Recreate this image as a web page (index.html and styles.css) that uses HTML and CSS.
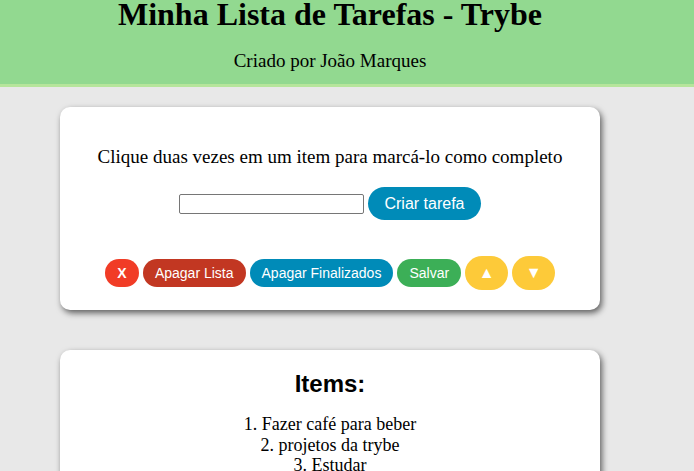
FILE: index.html
```html
<!DOCTYPE html>
<html lang="pt-BR">
<head>
<meta charset="utf-8">
<title>Minha Lista de Tarefas - Trybe</title>
<link rel="stylesheet" href="styles.css">
</head>
<body>
<header class="top">
  <div class="top-inner">
    <h1 class="title">Minha Lista de Tarefas - Trybe</h1>
    <p class="author">Criado por João Marques</p>
  </div>
</header>
<main class="page">
  <section class="card controls">
    <p class="hint">Clique duas vezes em um item para marcá-lo como completo</p>
    <div class="add-row">
      <input class="task-input" type="text">
      <button class="btn btn-create">Criar tarefa</button>
    </div>
    <div class="actions">
      <button class="btn btn-small btn-x">X</button>
      <button class="btn btn-small btn-clear">Apagar Lista</button>
      <button class="btn btn-small btn-done">Apagar Finalizados</button>
      <button class="btn btn-small btn-save">Salvar</button>
      <button class="btn btn-arrow">▲</button>
      <button class="btn btn-arrow">▼</button>
    </div>
  </section>
  <section class="card items">
    <h2 class="items-title">Items:</h2>
    <ol class="task-list">
      <li>Fazer café para beber</li>
      <li>projetos da trybe</li>
      <li>Estudar</li>
    </ol>
  </section>
</main>
</body>
</html>
```
FILE: styles.css
```css
html, body {
  margin: 0;
  padding: 0;
}
body {
  background: #e8e8e8;
  font-family: "Liberation Serif", "Times New Roman", serif;
  color: #000;
  overflow: hidden;
}
.top {
  background: #92d990;
  border-bottom: 3px solid #b6e59b;
  height: 84px;
}
.top-inner {
  width: 660px;
  text-align: center;
}
.title {
  margin: 0;
  font-size: 32px;
  line-height: 28px;
  font-weight: bold;
}
.author {
  margin: 22px 0 0;
  font-size: 19px;
  line-height: 22px;
}
.page {
  width: 540px;
  margin: 20px 0 0 60px;
  display: flex;
  flex-direction: column;
  gap: 40px;
}
.card {
  background: #fff;
  border-radius: 10px;
  box-shadow: 2px 3px 6px rgba(0, 0, 0, 0.6);
  text-align: center;
}
.controls {
  height: 203px;
  padding-top: 38px;
  box-sizing: border-box;
}
.hint {
  margin: 0;
  font-size: 19px;
  line-height: 24px;
}
.add-row {
  display: flex;
  justify-content: center;
  align-items: center;
  gap: 4px;
  margin-top: 18px;
}
.task-input {
  width: 185px;
  height: 20px;
  box-sizing: border-box;
  border: 1px solid #767676;
  border-radius: 2px;
  padding: 0;
  margin: 0;
}
.btn {
  border: none;
  color: #fff;
  font-family: "Liberation Sans", Arial, sans-serif;
  border-radius: 17px;
  cursor: pointer;
  margin: 0;
}
.btn-create {
  background: #008bb8;
  font-size: 16px;
  height: 33px;
  padding: 0 16px;
}
.actions {
  display: flex;
  justify-content: center;
  align-items: center;
  gap: 4px;
  margin-top: 36px;
}
.btn-small {
  font-size: 14px;
  height: 28px;
  padding: 0 12px;
  border-radius: 14px;
}
.btn-x {
  background: #f13c26;
  font-weight: bold;
  width: 34px;
  padding: 0;
}
.btn-clear { background: #c23722; }
.btn-done { background: #008bb8; }
.btn-save { background: #3caf57; }
.btn-arrow {
  background: #fdca39;
  width: 43px;
  height: 34px;
  font-size: 16px;
  padding: 0;
}
.items {
  padding-top: 20px;
  min-height: 200px;
}
.items-title {
  margin: 0;
  font-family: "Liberation Sans", Arial, sans-serif;
  font-size: 24px;
  line-height: 28px;
  font-weight: bold;
}
.task-list {
  list-style: decimal inside;
  margin: 16px 0 0;
  padding: 0;
  font-size: 18px;
  line-height: 20.5px;
}
```
